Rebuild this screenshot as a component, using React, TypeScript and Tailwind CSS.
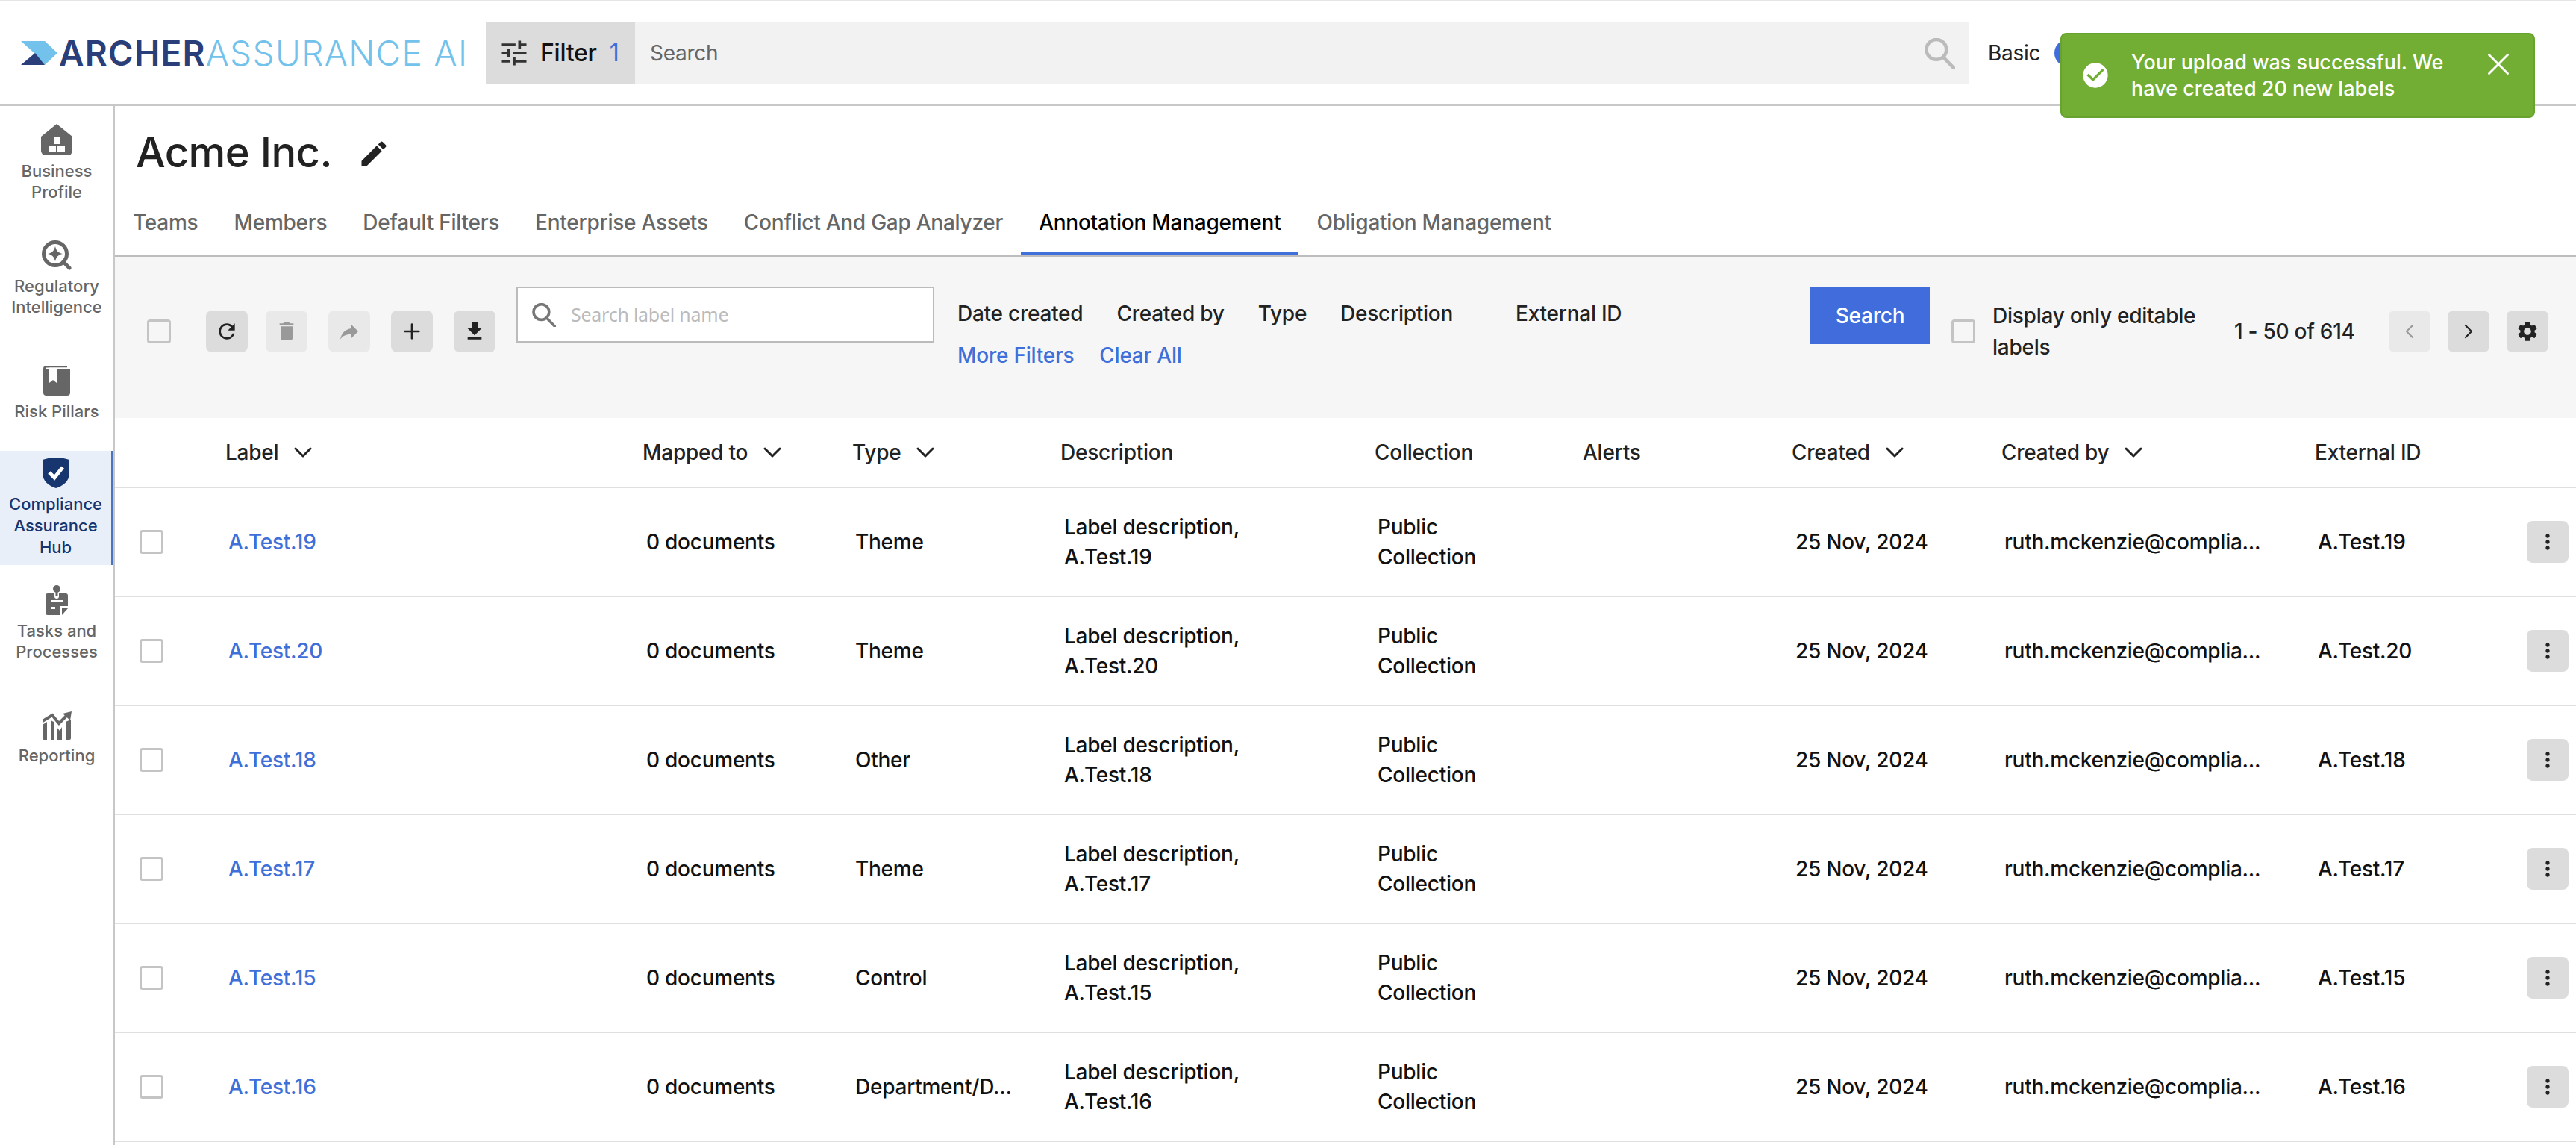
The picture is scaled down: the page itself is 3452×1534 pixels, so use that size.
import { ChevronDown, ChevronLeft, ChevronRight, Plus, X } from "lucide-react";
import { MdCheckCircle, MdDelete, MdEdit, MdFileDownload, MdMoreVert, MdRefresh, MdReply, MdSettings, MdTune } from "react-icons/md";

const tabs = [
  "Teams",
  "Members",
  "Default Filters",
  "Enterprise Assets",
  "Conflict And Gap Analyzer",
  "Annotation Management",
  "Obligation Management",
];

const rows = [
  { id: "A.Test.19", type: "Theme" },
  { id: "A.Test.20", type: "Theme" },
  { id: "A.Test.18", type: "Other" },
  { id: "A.Test.17", type: "Theme" },
  { id: "A.Test.15", type: "Control" },
  { id: "A.Test.16", type: "Department/D..." },
];

const columns = "grid grid-cols-[149px_559px_281px_279px_421px_279px_280px_281px_420px_1fr] items-center";

function HouseIcon() {
  return (
    <svg width="42" height="42" viewBox="0 0 42 42" className="fill-[#666]">
      <path d="M21 0 L42 17 V36 a6 6 0 0 1 -6 6 H6 a6 6 0 0 1 -6 -6 V17 Z" />
      <path d="M17 17 h9 v10 h-9 Z M10 29 h10 v9 h-10 Z M22 29 h10 v9 h-10 Z" className="fill-white" />
    </svg>
  );
}

function IntelIcon() {
  return (
    <svg width="40" height="40" viewBox="0 0 40 40" fill="none">
      <circle cx="18" cy="18" r="15.5" stroke="#666" strokeWidth="5" />
      <path d="M29 29 L37 37" stroke="#666" strokeWidth="5" strokeLinecap="round" />
      <path d="M18 8 C19.5 14 22 16.5 28 18 C22 19.5 19.5 22 18 28 C16.5 22 14 19.5 8 18 C14 16.5 16.5 14 18 8 Z" fill="#666" />
    </svg>
  );
}

function BookIcon() {
  return (
    <svg width="36" height="40" viewBox="0 0 36 40">
      <path d="M4 0 H32 V2.5 H4 Z" fill="#666" />
      <path d="M0 4 a4 4 0 0 1 4 -4 V4 H35 a1 1 0 0 1 1 1 V36 a4 4 0 0 1 -4 4 H4 a4 4 0 0 1 -4 -4 Z" fill="#666" />
      <path d="M8 2.5 H36 V4 H8 Z" fill="white" />
      <path d="M8 4 H18 V23 L13 19 L8 23 Z" fill="white" />
    </svg>
  );
}

function ShieldIcon() {
  return (
    <svg width="36" height="41" viewBox="0 0 36 41">
      <path d="M18 0 C24 0 30 1 36 3 V21 C36 31 28 38 18 41 C8 38 0 31 0 21 V3 C6 1 12 0 18 0 Z" fill="#17356f" />
      <path d="M9 20 L16 27 L27 13" fill="none" stroke="white" strokeWidth="5" />
    </svg>
  );
}

function TasksIcon() {
  return (
    <svg width="30" height="40" viewBox="0 0 30 40">
      <circle cx="15" cy="5" r="5" fill="#666" />
      <path d="M13.5 8 h3 v7 h-3 Z" fill="#666" />
      <path d="M3 11 H12 V15 a3 3 0 0 0 6 0 V11 H27 a3 3 0 0 1 3 3 V28 H20 V40 H3 a3 3 0 0 1 -3 -3 V14 a3 3 0 0 1 3 -3 Z" fill="#666" />
      <path d="M7 20 H23 V23 H7 Z M7 29 H13 V32 H7 Z" fill="white" />
      <path d="M30 30 V31 L22 40 V30 Z" fill="#666" />
    </svg>
  );
}

function ChartIcon() {
  return (
    <svg width="39" height="38" viewBox="0 0 39 38" fill="#666">
      <path d="M0 18 L6 14 V38 H2 a2 2 0 0 1 -2 -2 Z M11 12 L15 14 V38 H11 Z M19 21 L23 26 L26 21 V38 H19 Z M31 14 L38 11 V36 a2 2 0 0 1 -2 2 H31 Z" />
      <path d="M0 13 L13 5 L22 16 L33 5" fill="none" stroke="#666" strokeWidth="4" />
      <path d="M27 3 L39 0 L37 12 Z" />
    </svg>
  );
}

function Magnifier({ size, className = "" }: { size: number; className?: string }) {
  return (
    <svg width={size} height={size} viewBox="0 0 40 40" fill="none" stroke="currentColor" strokeWidth="4.5" className={`shrink-0 ${className}`}>
      <circle cx="15.5" cy="15" r="13" />
      <path d="M24.5 25 L38 39" strokeLinecap="round" />
    </svg>
  );
}

function NavItem({ icon, label, className = "" }: { icon: React.ReactNode; label: React.ReactNode; className?: string }) {
  return (
    <div className={`flex flex-col items-center text-center text-[22px] leading-[28px] font-medium tracking-normal text-[#666] ${className}`}>
      {icon}
      <div className="mt-[7px]">{label}</div>
    </div>
  );
}

function Checkbox({ className = "" }: { className?: string }) {
  return <span className={`block size-[32px] shrink-0 rounded-[4px] border-[3px] border-[#c4c4c4] ${className}`} />;
}

function ToolButton({ children, disabled = false, className = "" }: { children: React.ReactNode; disabled?: boolean; className?: string }) {
  return (
    <button
      className={`flex size-[56px] shrink-0 items-center justify-center rounded-[8px] ${
        disabled ? "bg-[#e9e9e9] text-[#999]" : "bg-[#dcdcdc] text-[#222]"
      } ${className}`}
    >
      {children}
    </button>
  );
}

function HeaderCell({ label, sort = false }: { label: string; sort?: boolean }) {
  return (
    <div className="-ml-[1px] flex items-center font-medium text-[#222]">
      {label}
      {sort && <ChevronDown size={40} strokeWidth={1.8} className="-mr-[10px] ml-[13px]" />}
    </div>
  );
}

export default function App() {
  return (
    <div className="relative h-[1534px] overflow-hidden bg-white font-[Inter,sans-serif] text-[28px] tracking-[-0.25px] text-[#111]">
      <header className="flex h-[142px] items-center border-t-2 border-b-2 border-t-[#e5e5e5] border-b-[#c8c8c8] pl-[28px]">
        <svg width="49" height="32" viewBox="0 0 49 32" className="shrink-0">
          <path d="M0 0 H32 L49 16 L32 32 L19 17 Z" fill="#72c2ec" />
          <path d="M0 32 L19 16 L32 32 Z" fill="#2a3f7a" />
        </svg>
        <div className="ml-[2px] w-[572px] shrink-0 text-[46px] leading-none whitespace-nowrap">
          <span className="font-semibold tracking-[1.2px] text-[#2a3f7a]">ARCHER</span>
          <span className="font-light tracking-[1.4px] text-[#72c2ec]">ASSURANCE AI</span>
        </div>
        <div className="flex h-[82px] w-[200px] shrink-0 items-center bg-[#dcdcdc] pl-[16px] text-[32px] font-medium">
          <MdTune size={44} className="text-[#333]" />
          <span className="ml-[13px] text-[#111]">Filter</span>
          <span className="ml-[17px] font-normal text-[#3f6fd8]">1</span>
        </div>
        <div className="flex h-[82px] w-[1788px] shrink-0 items-center justify-between bg-[#f2f2f2] pr-[19px] pl-[20px] text-[#666]">
          <span>Search</span>
          <Magnifier size={41} className="text-[#bbb]" />
        </div>
        <span className="ml-[25px] text-[#222]">Basic</span>
        <span className="ml-[19px] h-[36px] w-[60px] rounded-full bg-[#416cdb]" />
      </header>

      <div className="flex">
        <aside className="h-[1392px] w-[154px] shrink-0 border-r-2 border-[#c8c8c8] pt-[24px]">
          <NavItem icon={<HouseIcon />} label={<>Business<br />Profile</>} />
          <NavItem icon={<IntelIcon />} label={<>Regulatory<br />Intelligence</>} className="mt-[51px]" />
          <NavItem icon={<BookIcon />} label="Risk Pillars" className="mt-[65px]" />
          <div className="mt-[39px] flex h-[153px] flex-col items-center border-r-[3px] border-[#4a74c0] bg-[#e9eff8] pt-[9px] text-center text-[22px] leading-[29px] font-medium tracking-normal text-[#17356f]">
            <ShieldIcon />
            <div className="mt-[7px]">Compliance<br />Assurance<br />Hub</div>
          </div>
          <NavItem icon={<TasksIcon />} label={<>Tasks and<br />Processes</>} className="mt-[27px]" />
          <NavItem icon={<ChartIcon />} label="Reporting" className="mt-[66px]" />
        </aside>

        <main className="min-w-0 flex-1">
          <div className="flex h-[110px] items-start pt-[20px] pl-[28px]">
            <h1 className="text-[56px] leading-[84px] font-medium tracking-[-0.5px] text-[#222]">Acme Inc.</h1>
            <MdEdit size={44} className="mt-[22px] ml-[34px] text-[#222]" />
          </div>

          <div className="flex h-[92px] border-b-2 border-[#bdbdbd]">
            {tabs.map((t) => (
              <div
                key={t}
                className={`flex h-[90px] items-center border-b-4 px-[24px] pt-[6px] font-medium ${
                  t === "Annotation Management" ? "border-[#3f6fd8] text-black" : "border-transparent text-[#666]"
                }`}
              >
                {t}
              </div>
            ))}
          </div>

          <div className="flex h-[216px] items-start bg-[#f6f6f6] pl-[43px]">
            <Checkbox className="mt-[84px]" />
            <div className="mt-[72px] ml-[47px] flex gap-[28px]">
              <ToolButton className="-mr-[4px]"><MdRefresh size={32} /></ToolButton>
              <ToolButton disabled><MdDelete size={32} /></ToolButton>
              <ToolButton disabled><MdReply size={32} className="-scale-x-100" /></ToolButton>
              <ToolButton><Plus size={32} strokeWidth={2} /></ToolButton>
              <ToolButton><MdFileDownload size={32} /></ToolButton>
            </div>
            <div className="mt-[40px] ml-[28px] flex h-[75px] w-[560px] items-center border-2 border-[#bbb] bg-white pl-[19px]">
              <Magnifier size={32} className="text-[#777]" />
              <input
                placeholder="Search label name"
                className="ml-[20px] w-[400px] font-['Noto_Sans',sans-serif] text-[25px] outline-none placeholder:text-[#bbb]"
              />
            </div>
            <div className="mt-[54px] ml-[31px] w-[1143px] shrink-0 font-medium">
              <div className="flex h-[43px] items-center text-[#222]">
                <span>Date created</span>
                <span className="ml-[45px]">Created by</span>
                <span className="ml-[45px]">Type</span>
                <span className="ml-[45px]">Description</span>
                <span className="ml-[84px]">External ID</span>
              </div>
              <div className="flex h-[70px] items-center font-medium text-[#3f6fd8]">
                <span>More Filters</span>
                <span className="ml-[34px]">Clear All</span>
              </div>
            </div>
            <button className="mt-[40px] flex h-[77px] w-[160px] shrink-0 items-center justify-center bg-[#416cdb] font-medium text-white">
              Search
            </button>
            <Checkbox className="mt-[84px] ml-[29px]" />
            <div className="mt-[58px] ml-[23px] w-[300px] shrink-0 leading-[42px] font-medium text-[#222]">
              Display only editable labels
            </div>
            <div className="mt-[84px] ml-[24px] leading-[32px] font-medium whitespace-nowrap text-[#222]">1 - 50 of 614</div>
            <div className="mt-[72px] ml-[45px] flex gap-[23px]">
              <ToolButton disabled><ChevronLeft size={32} strokeWidth={1.6} /></ToolButton>
              <ToolButton><ChevronRight size={32} strokeWidth={1.6} /></ToolButton>
              <ToolButton><MdSettings size={32} /></ToolButton>
            </div>
          </div>

          <div className={`${columns} h-[94px] border-b-2 border-[#e0e0e0]`}>
            <div />
            <HeaderCell label="Label" sort />
            <HeaderCell label="Mapped to" sort />
            <HeaderCell label="Type" sort />
            <HeaderCell label="Description" />
            <HeaderCell label="Collection" />
            <HeaderCell label="Alerts" />
            <HeaderCell label="Created" sort />
            <HeaderCell label="Created by" sort />
            <HeaderCell label="External ID" />
          </div>

          {rows.map((r) => (
            <div key={r.id} className={`${columns} h-[146px] border-b-2 border-[#e0e0e0] leading-[40px] font-[450]`}>
              <div className="pl-[33px]"><Checkbox /></div>
              <a className="pl-[3px] text-[#3f6fd8]">{r.id}</a>
              <div className="pl-[4px]">0 documents</div>
              <div className="pl-[3px] whitespace-nowrap">{r.type}</div>
              <div className="max-w-[300px] pl-[4px]">Label description, {r.id}</div>
              <div className="max-w-[190px] pl-[3px]">Public Collection</div>
              <div />
              <div className="pl-[4px]">25 Nov, 2024</div>
              <div className="pl-[3px] whitespace-nowrap">ruth.mckenzie@complia...</div>
              <div className="flex items-center justify-between pl-[3px]">
                {r.id}
                <ToolButton className="mr-[10px]"><MdMoreVert size={32} /></ToolButton>
              </div>
            </div>
          ))}
        </main>
      </div>

      <div className="absolute top-[44px] right-[55px] flex h-[114px] w-[636px] items-center rounded-[8px] border-2 border-[#67a32e] bg-[#71ae33] pl-[25px] text-[27px] leading-[35px] font-medium tracking-normal text-white">
        <MdCheckCircle size={40} className="shrink-0" />
        <div className="ml-[28px] w-[440px]">Your upload was successful. We have created 20 new labels</div>
        <X size={50} strokeWidth={1.4} className="mt-[15px] ml-[27px] shrink-0 self-start" />
      </div>
    </div>
  );
}
